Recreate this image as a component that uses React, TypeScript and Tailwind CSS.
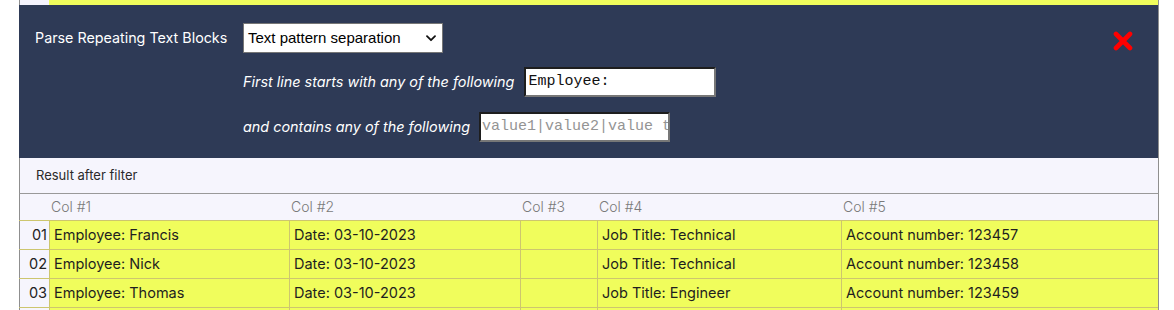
import React from "react";

const rows = [
  ["01", "Employee: Francis", "Date: 03-10-2023", "", "Job Title: Technical", "Account number: 123457"],
  ["02", "Employee: Nick", "Date: 03-10-2023", "", "Job Title: Technical", "Account number: 123458"],
  ["03", "Employee: Thomas", "Date: 03-10-2023", "", "Job Title: Engineer", "Account number: 123459"],
  ["", "", "", "", "", ""],
];

const widths = ["w-[30px]", "w-[240px]", "w-[231px]", "w-[77px]", "w-[244px]", "flex-1"];

export default function App() {
  return (
    <div className="w-[1174px] h-[310px] overflow-hidden bg-white" style={{ fontFamily: "Inter, 'Noto Sans', sans-serif" }}>
      <div className="ml-[19px] w-[1140px] flex flex-col">
        {/* top strip: previous row cut off */}
        <div className="flex h-[5px] border-r border-[#8f8f8f]">
          <div className="w-[30px] bg-[#f5f4fd] border-l border-[#8f8f8f]" />
          <div className="flex-1 bg-[#f0fd5c]" />
        </div>
        {/* dark panel */}
        <div className="h-[153px] bg-[#2e3a56] flex pl-[16px] pt-[18px] relative border-r border-[#8f8f8f]">
          <div className="w-[208px] h-[30px] flex items-center text-[14.3px] text-white">Parse Repeating Text Blocks</div>
          <div className="flex flex-col">
            <div className="w-[200px] h-[30px] bg-white border border-[#767676] flex items-center justify-between pl-[4px] pr-[6px] text-[15px] text-black" style={{ fontFamily: "'Liberation Sans', Arial, sans-serif" }}>
              <span>Text pattern separation</span>
              <svg width="10" height="7" viewBox="0 0 10 7"><path d="M1 1.2 L5 5.2 L9 1.2" fill="none" stroke="#111" strokeWidth="1.8" strokeLinecap="round" strokeLinejoin="round" /></svg>
            </div>
            <div className="flex items-center mt-[14px] h-[30px]">
              <span className="italic text-[14.4px] text-white">First line starts with any of the following</span>
              <div className="ml-[10px] w-[192px] h-[30px] bg-white border-2 border-t-[#1e1e1e] border-l-[#1e1e1e] border-r-[#777] border-b-[#777] flex items-center pl-[2px] text-[15px] text-[#111]" style={{ fontFamily: "'Liberation Mono', 'Courier New', monospace" }}>
                Employee:
              </div>
            </div>
            <div className="flex items-center mt-[15px] h-[30px]">
              <span className="italic text-[14.4px] text-white">and contains any of the following</span>
              <div className="ml-[9px] w-[191px] h-[30px] bg-white border-2 border-t-[#1e1e1e] border-l-[#1e1e1e] border-r-[#777] border-b-[#777] flex items-center pl-[1px] text-[15px] text-[#949494] overflow-hidden whitespace-nowrap" style={{ fontFamily: "'Liberation Mono', 'Courier New', monospace" }}>
                value1|value2|value t
              </div>
            </div>
          </div>
          <svg className="absolute left-[1094px] top-[26px]" width="20" height="20" viewBox="0 0 20 20">
            <path d="M3 3 L17 17 M17 3 L3 17" stroke="#ff0000" strokeWidth="4.6" strokeLinecap="round" />
          </svg>
        </div>
        {/* result band */}
        <div className="h-[36px] bg-[#f6f5fd] border-x border-[#8f8f8f] border-b border-b-[#999] flex items-center pl-[16px] pt-[1px] text-[13px] text-[#2a2a2a]">
          Result after filter
        </div>
        {/* header */}
        <div className="h-[26px] bg-[#f6f5fd] border-x border-[#8f8f8f] flex items-center pb-[2px] text-[14px] font-light text-[#7a7a7a]">
          <div className="w-[31px]" />
          <div className="w-[240px]">Col #1</div>
          <div className="w-[231px]">Col #2</div>
          <div className="w-[77px]">Col #3</div>
          <div className="w-[244px]">Col #4</div>
          <div className="flex-1">Col #5</div>
        </div>
        {/* rows */}
        <div className="border-r border-[#8f8f8f] flex flex-col">
          {rows.map((r, i) => (
            <div key={i} className="flex h-[29px] border-t border-[#cdc66e] text-[14.5px] text-[#1f1f1f]">
              {r.map((c, j) => (
                <div
                  key={j}
                  className={
                    widths[j] +
                    " flex items-center pb-[1px] " +
                    (j === 0
                      ? "bg-[#f6f5fd] border-l border-[#8f8f8f] justify-end pr-[2px] text-[#222]"
                      : "bg-[#f0fd5c] border-l border-[#cdc66e] pl-[4px]")
                  }
                >
                  {c}
                </div>
              ))}
            </div>
          ))}
        </div>
      </div>
    </div>
  );
}
